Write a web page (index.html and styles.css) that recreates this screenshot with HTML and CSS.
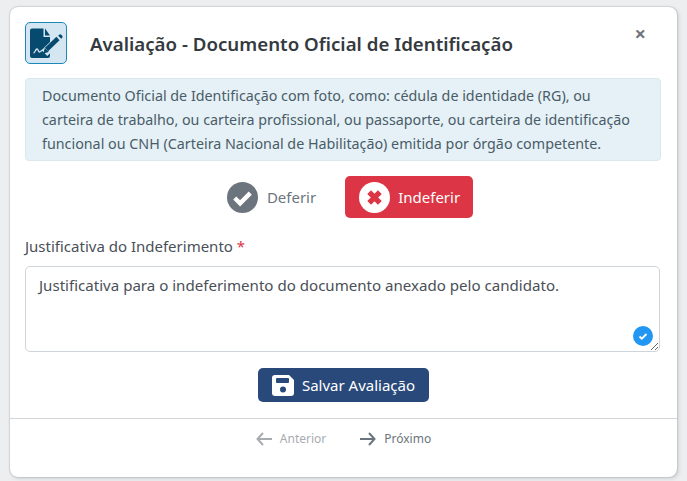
FILE: index.html
```html
<!DOCTYPE html>
<html lang="pt-BR">
<head>
  <meta charset="UTF-8" />
  <meta name="viewport" content="width=device-width, initial-scale=1.0" />
  <title>Avaliação do documento</title>
  <link rel="stylesheet" href="styles.css">
</head>
<body>
  <div class="modal">
    <div class="modal-header">
      <div class="doc-icon">
        <svg width="40" height="40" viewBox="0 0 40 40">
          <path d="M6 5.500h11.500v8.500H24v19a2 2 0 0 1-2 2H6a2 2 0 0 1-2-2V7.500a2 2 0 0 1 2-2z" fill="#064a70"/>
          <path d="M19 5.500l5 7h-5z" fill="#064a70"/>
          <path d="M7.500 30c1.500 0 2-4 3.500-4s1 3 2.500 3 1.500-2 3-1.500 1 1 3 .5" fill="none" stroke="#d3e6f1" stroke-width="1.300"/>
          <path d="M18.500 30L33.500 15.500" fill="none" stroke="#d3e6f1" stroke-width="8"/>
          <path d="M20.500 26.500L32 15.500" fill="none" stroke="#064a70" stroke-width="4.500"/>
          <path d="M17.300 30.500l1.500-5.500 4 4z" fill="#064a70"/>
          <path d="M32.200 12.800l1-1a1.500 1.500 0 0 1 2.100 0l.9.900a1.500 1.500 0 0 1 0 2.100l-1 1z" fill="#064a70"/>
        </svg>
      </div>
      <h2 class="modal-title">Avaliação - Documento Oficial de Identificação</h2>
      <span class="close-x">&times;</span>
    </div>

    <div class="info-box">Documento Oficial de Identificação com foto, como: cédula de identidade (RG), ou carteira de trabalho, ou carteira profissional, ou passaporte, ou carteira de identificação funcional ou CNH (Carteira Nacional de Habilitação) emitida por órgão competente.</div>

    <div class="choice-row">
      <div class="choice choice-off">
        <svg width="31" height="31" viewBox="0 0 32 32">
          <circle cx="16" cy="16" r="16" fill="#6c757d"/>
          <path d="M8 16.500l5.500 5.500L24 11.500" fill="none" stroke="#fff" stroke-width="4.500"/>
        </svg>
        <span>Deferir</span>
      </div>
      <div class="choice choice-on">
        <svg width="31" height="31" viewBox="0 0 32 32">
          <circle cx="16" cy="16" r="16" fill="#fff"/>
          <path d="M10.500 10.500l11 11M21.500 10.500l-11 11" fill="none" stroke="#dc3545" stroke-width="5.500"/>
        </svg>
        <span>Indeferir</span>
      </div>
    </div>

    <label class="field-label" for="justificativa">Justificativa do Indeferimento <span class="req">*</span></label>
    <div class="field-wrap">
      <textarea id="justificativa" class="field-input">Justificativa para o indeferimento do documento anexado pelo candidato.</textarea>
      <span class="field-ok">
        <svg width="10" height="10" viewBox="0 0 10 10"><path d="M1.500 5.500l2.300 2.200 4.700-4.700" fill="none" stroke="#fff" stroke-width="1.800"/></svg>
      </span>
    </div>

    <div class="save-row">
      <button class="btn-save" type="button">
        <svg width="22" height="21" viewBox="0 0 22 21">
          <path d="M3 0h14l5 5v13a3 3 0 0 1-3 3H3a3 3 0 0 1-3-3V3a3 3 0 0 1 3-3z" fill="#fff"/>
          <rect x="4" y="3" width="13" height="5" rx="1" fill="#29497a"/>
          <circle cx="11" cy="14.500" r="3" fill="#29497a"/>
        </svg>
        Salvar Avaliação
      </button>
    </div>

    <div class="modal-footer">
      <span class="nav-link nav-disabled">
        <svg width="16" height="14" viewBox="0 0 16 14"><path d="M7 1L1.500 7 7 13M2 7h14" fill="none" stroke="currentColor" stroke-width="2"/></svg>
        Anterior
      </span>
      <span class="nav-link">
        <svg width="16" height="14" viewBox="0 0 16 14"><path d="M9 1l5.500 6L9 13M14 7H0" fill="none" stroke="currentColor" stroke-width="2"/></svg>
        Próximo
      </span>
    </div>
  </div>
</body>
</html>
```

FILE: styles.css
```css
* { box-sizing: border-box; }
html, body { height: 100%; }
body {
  margin: 0;
  padding: 7px 10px 4px;
  background-color: #eceef0;
  color: #343a40;
  font-family: "Noto Sans", "Open Sans", sans-serif;
  overflow: hidden;
}

.modal {
  height: 470px;
  background-color: #fff;
  border-radius: 8px;
  box-shadow: 0 0 2px rgba(0,0,0,0.35), 2px 2px 4px rgba(0,0,0,0.1);
  padding: 15px 0 0;
}

/* Header */
.modal-header {
  display: flex;
  align-items: center;
  padding: 0 15px;
  height: 42px;
}
.doc-icon {
  width: 42px;
  height: 42px;
  flex: none;
  display: flex;
  align-items: center;
  justify-content: center;
  background-color: #d3e6f1;
  border: 1px solid #1b88b8;
  border-radius: 5px;
}
.modal-title {
  margin: 0 0 0 23px;
  font-size: 18.700px;
  font-weight: 600;
  color: #343a40;
}
.close-x {
  margin-left: auto;
  margin-right: 16px;
  margin-top: -18px;
  font-size: 20px;
  font-weight: 700;
  line-height: 20px;
  color: #6c757d;
}

.info-box {
  margin: 14px 16px 0 15px;
  padding: 5px 17px 4px 16px;
  background-color: #e5f1f6;
  border: 1px solid #dbe8ee;
  border-radius: 4px;
  font-size: 14.300px;
  line-height: 24px;
  color: #4a5c68;
}

/* Deferir / Indeferir */
.choice-row {
  display: flex;
  justify-content: center;
  align-items: center;
  gap: 16px;
  margin-top: 15px;
}
.choice {
  display: flex;
  align-items: center;
  gap: 8px;
  height: 42px;
  padding: 0 13px 0 14px;
  border-radius: 5px;
  font-size: 15px;
}
.choice-off { color: #6c757d; gap: 9px; padding-left: 13px; }
.choice-on { background-color: #dc3545; color: #fff; }

.field-label {
  display: block;
  margin: 17px 15px 0;
  font-size: 15px;
  line-height: 22px;
  color: #495057;
}
.req { color: #dc3545; }

.field-wrap {
  position: relative;
  margin: 9px 17px 0 15px;
  height: 86px;
}
.field-input {
  display: block;
  width: 100%;
  height: 86px;
  padding: 7px 13px;
  border: 1px solid #ced4da;
  border-radius: 5px;
  font-family: inherit;
  font-size: 15.080px;
  line-height: 22px;
  color: #495057;
  outline: none;
}
.field-ok {
  position: absolute;
  right: 7px;
  bottom: 6px;
  width: 20px;
  height: 20px;
  display: flex;
  align-items: center;
  justify-content: center;
  background-color: #2196f3;
  border-radius: 50%;
}

.save-row {
  display: flex;
  justify-content: center;
  margin-top: 16px;
}
.btn-save {
  display: flex;
  align-items: center;
  gap: 8px;
  height: 34px;
  padding: 0 14px;
  background-color: #29497a;
  border: none;
  border-radius: 5px;
  color: #fff;
  font-family: inherit;
  font-size: 15px;
}

.modal-footer {
  display: flex;
  justify-content: center;
  gap: 34px;
  margin-top: 16px;
  padding-top: 12px;
  border-top: 1px solid #d3d5d7;
}
.nav-link {
  display: flex;
  align-items: center;
  gap: 8px;
  font-size: 12px;
  line-height: 16px;
  color: #6c757d;
}
.nav-disabled { color: #a7acb1; }
```
